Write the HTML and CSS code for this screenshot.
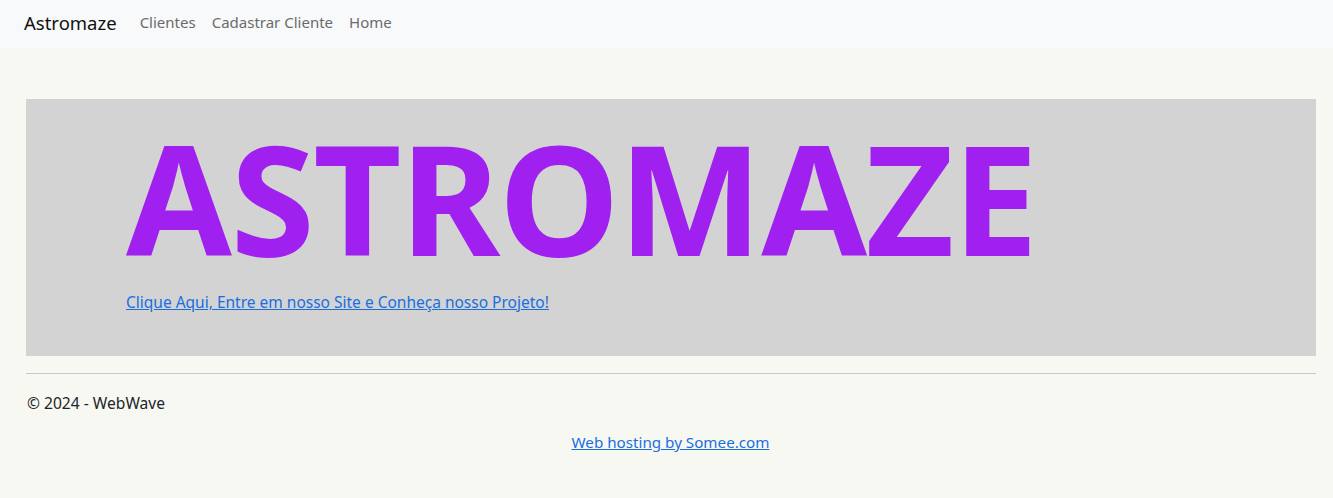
FILE: index.html
```html
<!DOCTYPE html>
<html lang="pt-br">
<head>
<meta charset="utf-8">
<title>Astromaze</title>
<link rel="stylesheet" href="styles.css">
</head>
<body>
<header class="navbar">
  <a class="brand" href="#">Astromaze</a>
  <nav class="nav">
    <a href="#">Clientes</a>
    <a href="#">Cadastrar Cliente</a>
    <a href="#">Home</a>
  </nav>
</header>
<main class="main">
  <section class="jumbo">
    <h1 class="title">ASTROMAZE</h1>
    <a class="cta" href="#">Clique Aqui, Entre em nosso Site e Conheça nosso Projeto!</a>
  </section>
  <hr class="rule">
  <footer class="footer">© 2024 - WebWave</footer>
</main>
<div class="hosting"><a href="#">Web hosting by Somee.com</a></div>
</body>
</html>
```
FILE: styles.css
```css
html, body { margin: 0; padding: 0; }
body {
  background: #f8f8f2;
  font-family: "Noto Sans", "Open Sans", sans-serif;
  color: #212529;
  font-size: 15px;
}
.navbar {
  background: #f8f9fa;
  height: 48px;
  display: flex;
  align-items: center;
  padding: 0 24px 4px;
  box-sizing: border-box;
}
.brand {
  font-size: 18.5px;
  color: #111;
  text-decoration: none;
  margin-right: 23px;
}
.nav { display: flex; gap: 16px; }
.nav a {
  color: #6b6b6b;
  text-decoration: none;
  font-size: 15px;
}
.main { padding: 51px 17px 0 26px; }
.jumbo {
  background: #d3d3d3;
  height: 257px;
  box-sizing: border-box;
  padding: 21px 100px 0;
}
.title {
  margin: 0;
  font-size: 153px;
  font-weight: 700;
  color: #a020f0;
  line-height: 1;
  letter-spacing: -1.5px;
}
.cta {
  display: inline-block;
  margin-top: 18px;
  color: #1a6fe0;
  font-size: 15.5px;
}
.rule {
  margin: 17px 0 0;
  border: 0;
  border-top: 1px solid #c8c8c4;
}
.footer { margin-top: 18px; font-size: 15.6px; padding-left: 1px; }
.hosting { text-align: center; margin-top: 18px; padding-left: 8px; }
.hosting a { color: #1a6fe0; font-size: 15.2px; }
```
